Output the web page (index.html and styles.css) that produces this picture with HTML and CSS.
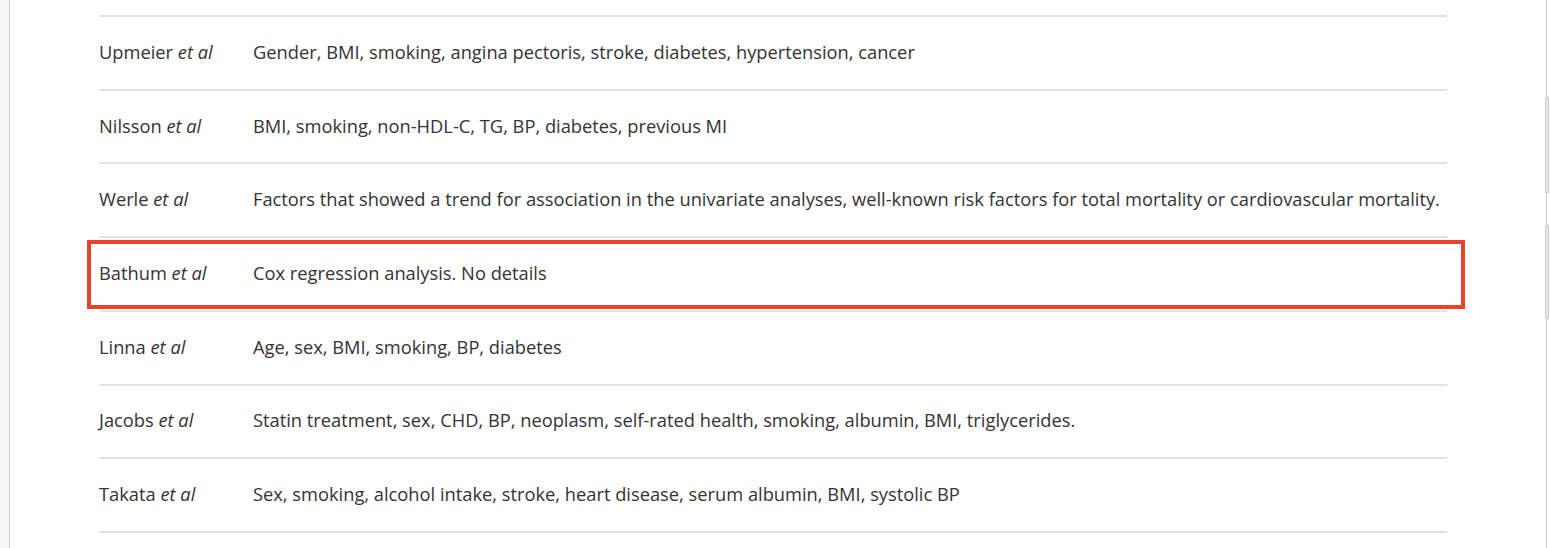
FILE: index.html
```html
<!DOCTYPE html>
<html lang="en">
<head>
<meta charset="utf-8">
<title>Adjustment factors</title>
<link rel="stylesheet" href="styles.css">
</head>
<body>
<div class="page">
  <div class="side"></div>
  <main class="main">
    <div class="table">
      <div class="row">
        <div class="study">Upmeier <em>et al</em></div>
        <div class="factors">Gender, BMI, smoking, angina pectoris, stroke, diabetes, hypertension, cancer</div>
      </div>
      <div class="row">
        <div class="study">Nilsson <em>et al</em></div>
        <div class="factors">BMI, smoking, non-HDL-C, TG, BP, diabetes, previous MI</div>
      </div>
      <div class="row">
        <div class="study">Werle <em>et al</em></div>
        <div class="factors">Factors that showed a trend for association in the univariate analyses, well-known risk factors for total mortality or cardiovascular mortality.</div>
      </div>
      <div class="row highlighted">
        <div class="study">Bathum <em>et al</em></div>
        <div class="factors">Cox regression analysis. No details</div>
        <div class="highlight-box"></div>
      </div>
      <div class="row">
        <div class="study">Linna <em>et al</em></div>
        <div class="factors">Age, sex, BMI, smoking, BP, diabetes</div>
      </div>
      <div class="row">
        <div class="study">Jacobs <em>et al</em></div>
        <div class="factors">Statin treatment, sex, CHD, BP, neoplasm, self-rated health, smoking, albumin, BMI, triglycerides.</div>
      </div>
      <div class="row">
        <div class="study">Takata <em>et al</em></div>
        <div class="factors">Sex, smoking, alcohol intake, stroke, heart disease, serum albumin, BMI, systolic BP</div>
      </div>
    </div>
  </main>
  <div class="scroll">
    <div class="thumb thumb-a"></div>
    <div class="thumb thumb-b"></div>
  </div>
</div>
</body>
</html>
```

FILE: styles.css
```css
html, body {
  margin: 0;
  padding: 0;
  background: #ffffff;
}

body {
  font-family: "Open Sans", Lato, "Liberation Sans", sans-serif;
  color: #333333;
}

.page {
  display: flex;
  height: 548px;
  overflow: hidden;
}

.side {
  width: 9px;
  flex: 0 0 9px;
  background: #f8f8f8;
  border-right: 1px solid #cccccc;
}

.main {
  flex: 1;
  padding-left: 89px;
  padding-top: 15px;
}

.table {
  width: 1348px;
  border-top: 2px solid #e2e2e2;
}

.row {
  position: relative;
  display: flex;
  align-items: center;
  box-sizing: border-box;
  height: 73.71px;
  padding-bottom: 2px;
  border-bottom: 2px solid #e2e2e2;
  font-size: 18.3px;
  line-height: 24px;
}

.study {
  width: 154px;
  flex: 0 0 154px;
  white-space: nowrap;
}

.factors {
  flex: 1;
  white-space: nowrap;
}

.highlight-box {
  position: absolute;
  left: -12px;
  right: -18px;
  top: 2px;
  bottom: 1px;
  border: 4px solid #e8442c;
  pointer-events: none;
}

.scroll {
  position: relative;
  width: 3px;
  flex: 0 0 3px;
  border-left: 1px solid #cccccc;
}

.thumb {
  position: absolute;
  left: -2px;
  width: 2px;
  background: #e6e6e6;
  border: 1px solid #cfcfcf;
}

.thumb-a {
  top: 97px;
  height: 94px;
}

.thumb-b {
  top: 225px;
  height: 92px;
}
```
